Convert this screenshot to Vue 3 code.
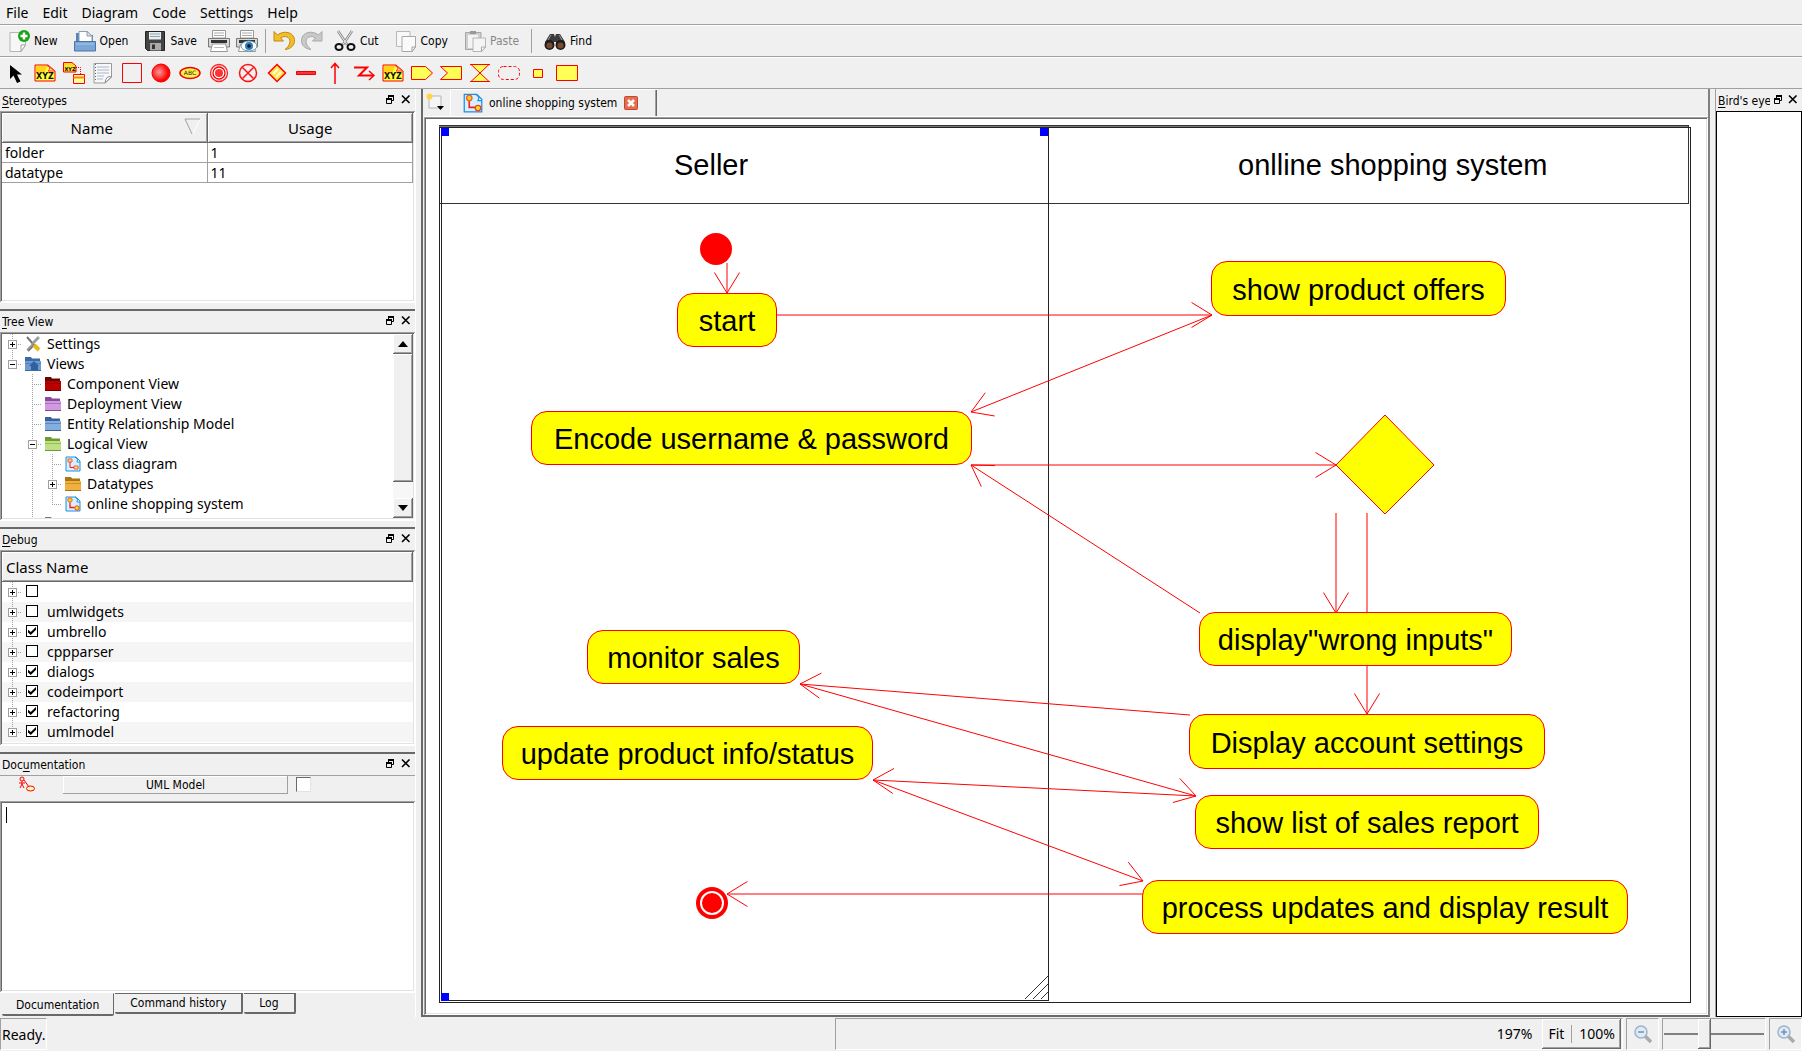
<script setup>
import { ref } from 'vue'

const menus = ['File', 'Edit', 'Diagram', 'Code', 'Settings', 'Help']

const sheet = '<path d="M2 2.500H17.500V15L13 21.500H2Z" fill="#f7f7f5" stroke="#b5b5b5"/><path d="M17.500 15H13V21.500Z" fill="#fff" stroke="#a0a0a0"/>'
const printer = '<path d="M4.500 0.500H17.500V8H4.500Z" fill="#fff" stroke="#999"/><path d="M6 3H16M6 5.500H16" stroke="#aaa"/><path d="M0.500 8.500H21.500V17H0.500Z" fill="#d8d8d8" stroke="#777"/><path d="M3 10H19V13H3Z" fill="#333"/><path d="M4.500 14H17.500L19.500 21.500H2.500Z" fill="#fff" stroke="#999"/><path d="M6 17.500H16" stroke="#bbb"/>'
const xyz = '<path d="M1 3H14L21 9V19H1Z" fill="#ffff3c" stroke="#f00"/><path d="M2 4H13L10 12H2Z" fill="#ffd21c"/><path d="M13 3.500C17 4 16 8 14 9H21Z" fill="#ffe680" stroke="#f33"/><text x="11" y="17" text-anchor="middle" font-family="DejaVu Sans" font-weight="bold" font-size="8" fill="#111">XYZ</text>'
const diagramDoc = '<path d="M1 1H11L15 5V15H1Z" fill="#d7efff" stroke="#1c8fe0"/><path d="M10 1Q14 3 12 6L15 6" fill="#fff" stroke="#1c8fe0"/>'
const folder = (fill, edge) => `<path d="M0 15V1H6L7 2.500H15V15Z" fill="${edge}"/><path d="M0 5H16V14H0Z" fill="${fill}"/><path d="M0 14.500H16" stroke="${edge}"/><path d="M0 7.500H16" stroke="${edge}" opacity=".5"/>`

const icons = {
  new: sheet + '<circle cx="16" cy="6" r="6" fill="#17a317"/><path d="M16 2.500V9.500M12.500 6H19.500" stroke="#fff" stroke-width="2.500"/>',
  open: '<path d="M2 12V3H7L8 5H19V12" fill="#5784b8"/><path d="M5 1.500H13L18 6V13H5Z" fill="#fff" stroke="#8a9db5"/><path d="M13 1.500V6H18Z" fill="#e6e6e6" stroke="#8a9db5"/><path d="M0.500 11.500H21.500V21H0.500Z" fill="#7ba6d6" stroke="#4a74a8"/><path d="M2 14H20" stroke="#a6c8ec"/>',
  save: '<path d="M1.500 1.500H20.500V20.500H3.500L1.500 18.500Z" fill="#444" stroke="#222"/><path d="M5 2H17V9.500H5Z" fill="#e9eef2"/><path d="M6 4H16M6 6.500H16" stroke="#8aa"/><path d="M6 13H17V20.500H6Z" fill="#aaa"/><path d="M8 14.500H11V19H8Z" fill="#333"/>',
  print: printer,
  preview: printer + '<ellipse cx="13" cy="16" rx="8" ry="5" fill="#fff" stroke="#69a"/><circle cx="13" cy="16" r="4" fill="#2b7fc4"/><circle cx="13" cy="16" r="1.800" fill="#111"/>',
  undo: '<path d="M1 1.500V11H10.500L7.500 8C12 5 17 7 17 11.500C17 15 14.500 17.500 12 19.500C18 19 22 15 21.500 9.500C20.500 2 11 0 4.500 5Z" fill="#f3bd2c" stroke="#c28a10"/>',
  redo: '<path d="M21 1.500V11H11.500L14.500 8C10 5 5 7 5 11.500C5 15 7.500 17.500 10 19.500C4 19 0 15 0.500 9.500C1.500 2 11 0 17.500 5Z" fill="#c9c9c9" stroke="#a8a8a8"/>',
  cut: '<path d="M4 1L13 14.500M18 1L9 14.500" stroke="#888" stroke-width="2.500"/><path d="M4 1L13 14.500M18 1L9 14.500" stroke="#eee"/><ellipse cx="5" cy="17" rx="3.500" ry="3" fill="none" stroke="#111" stroke-width="2"/><ellipse cx="17" cy="17" rx="3.500" ry="3" fill="none" stroke="#111" stroke-width="2"/>',
  copy: '<path d="M1.500 1.500H15V16.500H1.500Z" fill="#f8f8f8" stroke="#b8b8b8"/><path d="M7 6.500H20.500V17L17 21.500H7Z" fill="#fafafa" stroke="#a8a8a8"/><path d="M20.500 17H17V21.500Z" fill="#fff" stroke="#a0a0a0"/>',
  paste: '<path d="M1.500 2.500H17V19.500H1.500Z" fill="#d0d0d0" stroke="#a5a5a5"/><path d="M4 5H14V18H4Z" fill="#f4f4f4"/><path d="M6 1H12V4H6Z" fill="#999"/><path d="M9 8H21.500V17L17.500 21.500H9Z" fill="#f4f4f4" stroke="#b5b5b5"/><path d="M21.500 17H17.500V21.500Z" fill="#fff" stroke="#a8a8a8"/>',
  find: '<path d="M6 4H10L11 7L12 4H16L21 12V17H12V12H10V17H1V12Z" fill="#3c3c3c"/><circle cx="5.500" cy="15" r="5" fill="#1d1d1d"/><circle cx="16.500" cy="15" r="5" fill="#1d1d1d"/><circle cx="5.500" cy="15.500" r="3" fill="#7a4a30"/><circle cx="16.500" cy="15.500" r="3" fill="#7a4a30"/><path d="M7 5L4 10M15 5L18 10" stroke="#999"/>',
  pointer: '<path d="M5 3V17L8.500 13.500L12 21L15.500 19.500L12 12.500H17Z" fill="#000"/>',
  xyz,
  object: '<path d="M0.500 0.500H9L13 4V10H0.500Z" fill="#ffe030" stroke="#f00"/><text x="7" y="9" text-anchor="middle" font-family="DejaVu Sans" font-weight="bold" font-size="5">XYZ</text><path d="M13 5.500H17.500V12" fill="none" stroke="#f00" stroke-dasharray="1 1"/><path d="M10.500 12.500H21.500V21.500H10.500Z" fill="#ffffa0" stroke="#f00"/><path d="M10.500 15.500H21.500" stroke="#f80" stroke-width="2"/>',
  note: '<path d="M2 1.500H19.500V15L13 21H2Z" fill="#f6f8fa" stroke="#999"/><path d="M5 5H17M5 8H17M5 11H17M5 14H12M5 17H11" stroke="#aab6c6"/><path d="M3.500 2V20" stroke="#666" stroke-dasharray="1 2"/><path d="M19.500 15Q14 13 13 21Z" fill="#fff" stroke="#888"/>',
  box: '<path d="M1.500 1.500H20.500V20.500H1.500Z" fill="none" stroke="#f00"/>',
  ball: '<defs><radialGradient id="ball" cx=".4" cy=".45"><stop offset="0" stop-color="#ff9a9a"/><stop offset="1" stop-color="#f00"/></radialGradient></defs><circle cx="11" cy="11" r="9" fill="url(#ball)" stroke="#f00000"/>',
  abc: '<ellipse cx="11" cy="11" rx="10" ry="5.500" fill="#fff04a" stroke="#e00" stroke-width="1.500"/><text x="11" y="13" text-anchor="middle" font-family="DejaVu Sans" font-size="6" fill="#222">ABC</text>',
  ring: '<circle cx="11" cy="11" r="8.500" fill="none" stroke="#f22" stroke-width="1.300"/><circle cx="11" cy="11" r="6" fill="#fff" stroke="#f00" stroke-width="1.300"/><circle cx="11" cy="11" r="4" fill="#f33"/>',
  cross: '<circle cx="11" cy="11" r="8.500" fill="none" stroke="#f11" stroke-width="1.500"/><path d="M5.500 5.500L16.500 16.500M16.500 5.500L5.500 16.500" stroke="#f11" stroke-width="1.500"/>',
  diamond: '<path d="M11 2.500L19.500 11L11 19.500L2.500 11Z" fill="#ffe84a" stroke="#f00" stroke-width="1.500"/><path d="M7 12L12 7M10 15L15 10" stroke="#fffbe0" stroke-width="2"/>',
  bar: '<path d="M1.500 9.500H20.500V12.500H1.500Z" fill="#f33" stroke="#e00"/>',
  up: '<path d="M11 22V2M7 6L11 1.500L15 6" fill="none" stroke="#f00" stroke-width="1.500"/>',
  zigzag: '<path d="M1 5.500H14L6 13.500H20" fill="none" stroke="#f00" stroke-width="2"/><path d="M16 9L21 13.500L16 18" fill="none" stroke="#f00" stroke-width="1.500"/>',
  send: '<path d="M0.500 4.500H14.500L21.500 11L14.500 17.500H0.500Z" fill="#ff5" stroke="#f00"/>',
  accept: '<path d="M0.500 4.500H21.500V17.500H0.500L7.500 11Z" fill="#ff5" stroke="#f00"/>',
  time: '<path d="M2 2.500H20L2 19.500H20Z" fill="#ff5" stroke="#f00"/><path d="M1 2.500H21M1 19.500H21" stroke="#f00"/>',
  region: '<rect x="0.500" y="4.500" width="21" height="13" rx="5" fill="none" stroke="#f00" stroke-dasharray="3 2"/>',
  pin: '<path d="M6.500 7.500H15.500V15.500H6.500Z" fill="#ff5" stroke="#f00"/>',
  node: '<path d="M0.500 3.500H21.500V18.500H0.500Z" fill="#ff5" stroke="#f00"/>',
  tools: '<path d="M2 1L9 9L3 15" fill="none" stroke="#777" stroke-width="2"/><path d="M14 1L8 7" stroke="#aaa" stroke-width="3"/><path d="M9 9L14 14" stroke="#e8b818" stroke-width="4"/><path d="M13 2L2 14" stroke="#999" stroke-width="1.500"/>',
  views: folder('#6f9bd0', '#3a6ba5') + '<path d="M9 5L14 10H13V14H6V10H4Z" fill="#31609c"/>',
  red: folder('#b80000', '#6d0000'),
  purple: folder('#cf9ade', '#8a4a9c'),
  blue: folder('#85aee0', '#3a6299'),
  green: folder('#bfe080', '#6d9a35'),
  orange: folder('#efb040', '#a87414'),
  gray: folder('#aaa', '#777'),
  classDiagram: diagramDoc + '<path d="M3 3H7V6H3ZM9 10H13V13H9Z" fill="#ffd9b0" stroke="#f06020"/><path d="M5 6V11.500H9" fill="none" stroke="#e22"/>',
  activity: diagramDoc + '<circle cx="5" cy="4" r="2.200" fill="#ffd020" stroke="#f06020"/><circle cx="12" cy="12" r="2.200" fill="#ffe020" stroke="#f04020"/><path d="M5 6.500V11.500H9.500" fill="none" stroke="#e22" stroke-width="1.300"/>',
  newTab: '<path d="M3 3H15V15H3Z" fill="#f5f5f5" stroke="#b5b5b5"/><circle cx="3.500" cy="3.500" r="3" fill="#ffd640"/><path d="M11 13H18L14.500 17Z" fill="#000"/>',
  closeTab: '<rect x="1.500" y="1.500" width="13" height="13" rx="1" fill="#e07050" stroke="#c8452c"/><path d="M5 5L11 11M11 5L5 11" stroke="#fff" stroke-width="2.500"/>',
  float: '<path d="M3 1H9V3H3ZM1 4H7V6H1Z" fill="#000"/><path d="M3.500 4V1.500H8.500V6.500H7M1.500 4.500H6.500V9.500H1.500Z" fill="none" stroke="#000"/>',
  close: '<path d="M1 1.500L8.500 9M8.500 1.500L1 9" stroke="#000" stroke-width="1.600"/>',
  useCase: '<circle cx="3" cy="3" r="2" fill="none" stroke="#f00"/><path d="M3 5V8L1 12M3 8L5 12M0 7H6M5 4L10 11" fill="none" stroke="#f00"/><ellipse cx="11.500" cy="12.500" rx="4" ry="2.500" fill="#fff8b0" stroke="#f00"/>',
  zoomOut: '<path d="M11 11L17 17" stroke="#aaa" stroke-width="3.500"/><circle cx="7" cy="7" r="6" fill="#dfeaf5" stroke="#9db4cc" stroke-width="1.500"/><path d="M4 7H10" stroke="#6f93bd" stroke-width="1.500"/>',
  zoomIn: '<path d="M11 11L17 17" stroke="#aaa" stroke-width="3.500"/><circle cx="7" cy="7" r="6" fill="#dfeaf5" stroke="#9db4cc" stroke-width="1.500"/><path d="M4 7H10M7 4V10" stroke="#6f93bd" stroke-width="1.500"/>',
}

const actions = [
  { icon: 'new', text: 'New' },
  { icon: 'open', text: 'Open' },
  { icon: 'save', text: 'Save' },
  { icon: 'print' },
  { icon: 'preview' },
  { separator: true },
  { icon: 'undo' },
  { icon: 'redo' },
  { icon: 'cut', text: 'Cut' },
  { icon: 'copy', text: 'Copy' },
  { icon: 'paste', text: 'Paste', disabled: true },
  { separator: true },
  { icon: 'find', text: 'Find' },
]

const tools = [
  'pointer', 'xyz', 'object', 'note', 'box', 'ball', 'abc', 'ring', 'cross', 'diamond',
  'bar', 'up', 'zigzag', 'xyz', 'send', 'accept', 'time', 'region', 'pin', 'node',
]

const stereotypes = [
  { name: 'folder', usage: 1 },
  { name: 'datatype', usage: 11 },
]

// Branch cells, left to right: '' empty, v line, t tee, l last, + / - expander (e: expander that ends its line)
const tree = [
  { cells: ['+'], icon: 'tools', text: 'Settings' },
  { cells: ['e'], icon: 'views', text: 'Views' },
  { cells: ['', 't'], icon: 'red', text: 'Component View' },
  { cells: ['', 't'], icon: 'purple', text: 'Deployment View' },
  { cells: ['', 't'], icon: 'blue', text: 'Entity Relationship Model' },
  { cells: ['', '-'], icon: 'green', text: 'Logical View' },
  { cells: ['', 'v', 't'], icon: 'classDiagram', text: 'class diagram' },
  { cells: ['', 'v', '+'], icon: 'orange', text: 'Datatypes' },
  { cells: ['', 'v', 'l'], icon: 'activity', text: 'online shopping system' },
  { cells: ['', 't'], icon: 'gray', text: '' },
]

const branch = {
  '': '',
  v: 'M10 0V20',
  t: 'M10 0V20M10 10H20',
  l: 'M10 0V10M10 10H20',
  '+': 'M10 0V20M10 10H20',
  '-': 'M10 0V20M10 10H20',
  e: 'M10 0V10M10 10H20',
}

const classes = ref([
  { name: '', on: false },
  { name: 'umlwidgets', on: false },
  { name: 'umbrello', on: true },
  { name: 'cppparser', on: false },
  { name: 'dialogs', on: true },
  { name: 'codeimport', on: true },
  { name: 'refactoring', on: true },
  { name: 'umlmodel', on: true },
])

const notes = ref('')
const zoom = ref(39)

const nodes = [
  { text: 'start', x: 251, y: 174, w: 100, h: 54 },
  { text: 'Encode username & password', x: 105, y: 292, w: 441, h: 54 },
  { text: 'show product offers', x: 785, y: 142, w: 295, h: 55 },
  { text: 'display"wrong inputs"', x: 773, y: 493, w: 313, h: 54 },
  { text: 'Display account settings', x: 763, y: 595, w: 356, h: 55 },
  { text: 'show list of sales report', x: 769, y: 676, w: 344, h: 54 },
  { text: 'process updates and display result', x: 716, y: 761, w: 486, h: 54 },
  { text: 'monitor sales', x: 161, y: 511, w: 213, h: 54 },
  { text: 'update product info/status', x: 76, y: 607, w: 371, h: 54 },
]

const links = [
  [301, 144, 301, 174],
  [351, 196, 786, 196],
  [786, 196, 545, 293],
  [545, 346, 910, 346],
  [774, 494, 545, 346],
  [910, 394, 910, 494],
  [941, 394, 941, 595],
  [764, 596, 374, 565],
  [374, 565, 770, 677],
  [770, 677, 447, 661],
  [447, 661, 717, 762],
  [717, 775, 301, 775],
]

const HEAD_LENGTH = 24
const HEAD_ANGLE = 0.55

function linkPath([x1, y1, x2, y2]) {
  const back = Math.atan2(y1 - y2, x1 - x2)
  const wing = (a) => `${x2 + HEAD_LENGTH * Math.cos(a)} ${y2 + HEAD_LENGTH * Math.sin(a)}`
  return `M${x1} ${y1}L${x2} ${y2}M${wing(back - HEAD_ANGLE)}L${x2} ${y2}L${wing(back + HEAD_ANGLE)}`
}
</script>

<template>
  <div class="app">
    <nav class="menubar">
      <button v-for="m in menus" :key="m" type="button">{{ m }}</button>
    </nav>

    <div class="toolbar actions">
      <template v-for="(a, i) in actions" :key="i">
        <span v-if="a.separator" class="separator"></span>
        <button v-else type="button" :disabled="a.disabled" :class="{ labelled: a.text }">
          <svg width="22" height="22" viewBox="0 0 22 22" v-html="icons[a.icon]"></svg>
          <span v-if="a.text">{{ a.text }}</span>
        </button>
      </template>
    </div>

    <div class="toolbar tools">
      <button v-for="(t, i) in tools" :key="i" type="button">
        <svg width="22" height="22" viewBox="0 0 22 22" v-html="icons[t]"></svg>
      </button>
    </div>

    <main class="work">
      <aside class="docks">
        <section class="dock stereotypes">
          <header class="title">
            <h2><u>S</u>tereotypes</h2>
            <button type="button"><svg width="10" height="10" v-html="icons.float"></svg></button>
            <button type="button"><svg width="10" height="10" v-html="icons.close"></svg></button>
          </header>
          <div class="sunken">
            <table>
              <thead>
                <tr>
                  <th>
                    Name
                    <svg class="sort" width="17" height="17"><path d="M16 1L9 16" stroke="#fff" fill="none" /><path d="M16 1H1L8 16" stroke="#a0a0a0" fill="none" /></svg>
                  </th>
                  <th>Usage</th>
                </tr>
              </thead>
              <tbody>
                <tr v-for="s in stereotypes" :key="s.name">
                  <td>{{ s.name }}</td>
                  <td>{{ s.usage }}</td>
                </tr>
              </tbody>
            </table>
          </div>
        </section>

        <section class="dock treeview">
          <header class="title">
            <h2><u>T</u>ree View</h2>
            <button type="button"><svg width="10" height="10" v-html="icons.float"></svg></button>
            <button type="button"><svg width="10" height="10" v-html="icons.close"></svg></button>
          </header>
          <div class="sunken scroller">
            <ul class="rows tree">
              <li v-for="(r, i) in tree" :key="i">
                <svg v-for="(c, j) in r.cells" :key="j" class="branch" width="20" height="20">
                  <path :d="branch[c]" stroke="#a0a0a0" stroke-dasharray="1 1" />
                  <g v-if="'+-e'.includes(c) && c">
                    <rect x="6" y="6" width="8" height="8" fill="#fff" stroke="#a0a0a0" />
                    <path :d="c === '+' ? 'M8 10H13M10 8V13' : 'M8 10H13'" stroke="#000" />
                  </g>
                </svg>
                <svg class="glyph" width="16" height="16" v-html="icons[r.icon]"></svg>
                <span>{{ r.text }}</span>
              </li>
            </ul>
            <div class="scrollbar">
              <button type="button"><svg width="10" height="6"><path d="M0 6L5 0L10 6Z" /></svg></button>
              <div class="thumb"></div>
              <button type="button"><svg width="10" height="6"><path d="M0 0L5 6L10 0Z" /></svg></button>
            </div>
          </div>
        </section>

        <section class="dock debug">
          <header class="title">
            <h2><u>D</u>ebug</h2>
            <button type="button"><svg width="10" height="10" v-html="icons.float"></svg></button>
            <button type="button"><svg width="10" height="10" v-html="icons.close"></svg></button>
          </header>
          <div class="sunken">
            <div class="column-head">Class Name</div>
            <ul class="rows striped">
              <li v-for="(c, i) in classes" :key="i">
                <svg class="branch" width="20" height="20">
                  <path :d="branch[i === classes.length - 1 ? 'l' : 't']" stroke="#a0a0a0" stroke-dasharray="1 1" />
                  <rect x="6" y="6" width="8" height="8" fill="#fff" stroke="#a0a0a0" />
                  <path d="M8 10H13M10 8V13" stroke="#000" />
                </svg>
                <label><input v-model="c.on" type="checkbox" />{{ c.name }}</label>
              </li>
            </ul>
          </div>
        </section>

        <section class="dock documentation">
          <header class="title">
            <h2>Doc<u>u</u>mentation</h2>
            <button type="button"><svg width="10" height="10" v-html="icons.float"></svg></button>
            <button type="button"><svg width="10" height="10" v-html="icons.close"></svg></button>
          </header>
          <div class="subject">
            <svg width="17" height="17" v-html="icons.useCase"></svg>
            <button type="button">UML Model</button>
            <input type="checkbox" aria-label="UML Model" />
          </div>
          <div class="sunken editor">
            <textarea v-model="notes" aria-label="Documentation"></textarea>
            <span class="caret"></span>
          </div>
        </section>

        <nav class="dock-tabs">
          <button type="button" class="current">Documentation</button>
          <button type="button">Command history</button>
          <button type="button">Log</button>
        </nav>
      </aside>

      <section class="center">
        <div class="tabs">
          <button type="button" class="new-tab"><svg width="20" height="20" v-html="icons.newTab"></svg></button>
          <div class="tab">
            <svg width="20" height="20" viewBox="0 0 16 16" v-html="icons.activity"></svg>
            <span>online shopping system</span>
            <button type="button"><svg width="16" height="16" v-html="icons.closeTab"></svg></button>
          </div>
        </div>

        <div class="sunken canvas">
          <div class="sheet">
            <svg class="drawing" width="100%" height="100%">
              <g class="frames">
                <rect x="13" y="6" width="1249" height="78" stroke="#333" />
                <rect x="13" y="8" width="1251" height="875" stroke="#222" />
                <rect x="15" y="8" width="607" height="873" stroke="#222" />
                <path d="M13 7H1262" stroke="#777" />
              </g>
              <path class="grip" d="M599 880L622 857M607 880L622 865M615 880L622 873" />
              <g class="links">
                <path v-for="(l, i) in links" :key="i" :d="linkPath(l)" />
              </g>
              <path class="decision" d="M959 296L1008 346L959 395L910 346Z" />
              <circle cx="290" cy="130" r="16" fill="#f00" />
              <circle cx="286" cy="784" r="16" fill="#f00" />
              <circle cx="286" cy="784" r="11" fill="#f00" stroke="#fff" stroke-width="2" />
              <g class="handles">
                <rect x="15" y="9" width="8" height="8" />
                <rect x="614" y="9" width="8" height="8" />
                <rect x="15" y="874" width="8" height="8" />
              </g>
              <text x="248" y="56">Seller</text>
              <text x="812" y="56">onlline shopping system</text>
            </svg>
            <div
              v-for="n in nodes"
              :key="n.text"
              class="activity"
              :style="{ left: n.x + 'px', top: n.y + 'px', width: n.w + 'px', height: n.h + 'px' }"
            >{{ n.text }}</div>
          </div>
        </div>
      </section>

      <aside class="birdseye">
        <header class="title">
          <h2><u>B</u>ird's eye</h2>
          <button type="button"><svg width="10" height="10" v-html="icons.float"></svg></button>
          <button type="button"><svg width="10" height="10" v-html="icons.close"></svg></button>
        </header>
        <div class="overview"></div>
      </aside>
    </main>

    <footer class="status">
      <div class="message"><span class="well">Ready.</span></div>
      <div class="well zoom-levels">
        <output>197%</output>
        <div class="presets">
          <button type="button">Fit</button>
          <span class="separator"></span>
          <button type="button">100%</button>
        </div>
      </div>
      <button type="button" class="well"><svg width="18" height="18" v-html="icons.zoomOut"></svg></button>
      <div class="well"><input v-model="zoom" type="range" min="0" max="100" aria-label="Zoom" /></div>
      <button type="button" class="well"><svg width="18" height="18" v-html="icons.zoomIn"></svg></button>
    </footer>
  </div>
</template>

<style>
body {
  margin: 0;
  background: #f0f0f0;
}
</style>

<style scoped>
.app {
  display: flex;
  flex-direction: column;
  height: 100vh;
  overflow: hidden;
  background: #f0f0f0;
  color: #000;
  font: 15px/20px "Noto Sans", "Open Sans", sans-serif;
}

.app *,
.app *::before {
  box-sizing: border-box;
}

button {
  display: flex;
  align-items: center;
  margin: 0;
  padding: 0;
  border: 0;
  background: none;
  color: inherit;
  font: inherit;
  white-space: nowrap;
}

svg {
  flex: none;
  display: block;
}

.menubar {
  display: flex;
  flex: none;
  gap: 14px;
  height: 25px;
  padding: 1px 6px 0;
  border-bottom: 1px solid #a0a0a0;
  font-size: 14px;
}

.toolbar {
  display: flex;
  flex: none;
  align-items: center;
  height: 32px;
  border-top: 1px solid #fff;
  border-bottom: 1px solid #a0a0a0;
  font-family: "DejaVu Sans Condensed", "DejaVu Sans", sans-serif;
  font-size: 12px;
}

.actions button {
  padding: 0 3px;
}

.actions .labelled {
  gap: 4px;
  padding: 0 8px;
}

.actions button:disabled {
  color: #888;
}

.separator {
  width: 1px;
  height: 24px;
  margin: 0 4px;
  background: #a0a0a0;
}

.tools {
  padding-left: 1px;
}

.tools button {
  justify-content: center;
  width: 29px;
}

.work {
  display: flex;
  flex: 1;
  min-height: 0;
  gap: 5px;
}

.docks {
  display: flex;
  flex: none;
  flex-direction: column;
  width: 416px;
  border-right: 1px solid #fff;
}

.dock {
  display: flex;
  flex: none;
  flex-direction: column;
  margin-bottom: 6px;
  border-bottom: 1px solid #fff;
}

.dock + .dock {
  border-top: 2px solid #696969;
}

.title {
  display: flex;
  flex: none;
  align-items: center;
  gap: 6px;
  height: 21px;
  padding: 0 4px 0 2px;
}

.stereotypes .title,
.birdseye .title {
  height: 22px;
  padding-top: 1px;
}

.title h2 {
  flex: 1;
  min-width: 0;
  margin: 0;
  overflow: hidden;
  white-space: nowrap;
  font: 12px/20px "DejaVu Sans Condensed", "DejaVu Sans", sans-serif;
}

.title u {
  text-underline-offset: 2px;
}

.title button {
  padding-bottom: 3px;
}

.sunken {
  padding: 2px;
  background: #fff;
  box-shadow: inset 1px 1px #a0a0a0, inset -1px -1px #fff, inset 2px 2px #696969, inset -2px -2px #e3e3e3;
}

.stereotypes .sunken {
  height: 191px;
}

.treeview .sunken {
  height: 188px;
}

.debug .sunken {
  height: 195px;
}

table {
  width: 100%;
  table-layout: fixed;
  border-collapse: separate;
  border-spacing: 0;
}

th,
.column-head {
  position: relative;
  height: 30px;
  padding: 0;
  background: #f0f0f0;
  box-shadow: inset -1px -1px #696969, inset 1px 1px #fff, inset -2px -2px #a0a0a0;
  font-weight: normal;
  font-size: 15px;
}

th:first-child {
  padding-right: 26px;
}

.sort {
  position: absolute;
  top: 5px;
  right: 7px;
}

td {
  height: 20px;
  padding: 0 3px;
  border-right: 1px solid #a0a0a0;
  border-bottom: 1px solid #a0a0a0;
  font-size: 14px;
  line-height: 19px;
}

.column-head {
  padding: 5px 4px;
}

.rows {
  flex: 1;
  min-width: 0;
  margin: 0;
  padding: 0;
  overflow: hidden;
  list-style: none;
  font-size: 14px;
}

.rows li {
  display: flex;
  align-items: center;
  height: 20px;
  white-space: nowrap;
}

.striped li:nth-child(even) {
  background: #f5f5f5;
}

.branch {
  fill: none;
  shape-rendering: crispEdges;
}

.glyph {
  margin: 0 6px 0 3px;
}

.rows label {
  display: flex;
  align-items: center;
  gap: 9px;
  padding-left: 4px;
}

.rows input {
  display: grid;
  place-content: center;
  width: 12px;
  height: 12px;
  margin: 0 0 2px;
  border: 1px solid #000;
  background: #fff;
  appearance: none;
}

.rows input:checked::before {
  width: 8px;
  height: 8px;
  background: #000;
  clip-path: polygon(0 35%, 35% 62%, 100% 0, 100% 35%, 35% 100%, 0 70%);
  content: "";
}

.scroller {
  display: flex;
}

.scrollbar {
  display: flex;
  flex-direction: column;
  width: 20px;
  background: #f7f7f7;
}

.scrollbar button,
.thumb {
  justify-content: center;
  height: 20px;
  background: #f0f0f0;
  box-shadow: inset -1px -1px #696969, inset 1px 1px #fff, inset -2px -2px #a0a0a0;
}

.thumb {
  flex: 1;
  margin-bottom: 16px;
}

.documentation {
  flex: 1;
  min-height: 0;
  margin-bottom: 0;
}

.subject {
  display: flex;
  flex: none;
  align-items: flex-start;
  height: 26px;
  padding-left: 19px;
  border-top: 1px solid #a0a0a0;
  font: 12px/18px "DejaVu Sans Condensed", "DejaVu Sans", sans-serif;
}

.subject button {
  justify-content: center;
  width: 225px;
  margin: 0 8px 0 27px;
  box-shadow: inset -1px -1px #a0a0a0, inset 1px 1px #fff;
}

.subject input {
  width: 15px;
  height: 15px;
  margin: 1px 0 0;
  border: 1px solid;
  border-color: #696969 #e3e3e3 #e3e3e3 #696969;
  background: #fff;
  appearance: none;
}

.editor {
  position: relative;
  display: flex;
  flex: 1;
  min-height: 0;
}

.editor textarea {
  flex: 1;
  padding: 4px;
  border: 0;
  outline: 0;
  resize: none;
  font: inherit;
}

.caret {
  position: absolute;
  top: 6px;
  left: 6px;
  width: 1px;
  height: 16px;
  background: #000;
}

.dock-tabs {
  display: flex;
  flex: none;
  align-items: flex-start;
  gap: 1px;
  height: 24px;
  padding-left: 2px;
  font: 12px/20px "DejaVu Sans Condensed", "DejaVu Sans", sans-serif;
}

.dock-tabs button {
  height: 21px;
  padding: 0 15px;
  border: solid #696969;
  border-width: 1px 2px 2px 0;
  border-radius: 0 0 2px 2px;
}

.dock-tabs .current {
  height: 23px;
  padding: 2px 14px 0;
  border-top-color: #f0f0f0;
  border-right-width: 1px;
}

.center {
  display: flex;
  flex: 1;
  flex-direction: column;
  min-width: 0;
  border: solid #696969;
  border-width: 0 2px 2px;
  border-right-color: #808080;
}

.tabs {
  display: flex;
  flex: none;
  height: 28px;
  border-bottom: 1px solid #fff;
  font: 12px/20px "DejaVu Sans Condensed", "DejaVu Sans", sans-serif;
}

.new-tab {
  width: 27px;
  padding-left: 3px;
}

.tab {
  display: flex;
  align-items: center;
  gap: 6px;
  padding: 0 18px 0 12px;
  border: solid #fff;
  border-width: 1px 0 0 1px;
  box-shadow: inset -1px 0 #696969, inset -2px 0 #a0a0a0;
}

.canvas {
  display: flex;
  flex: 1;
  min-height: 0;
  margin-left: 1px;
}

.sheet {
  position: relative;
  flex: 1;
  overflow: hidden;
}

.drawing,
.activity {
  font: 29px/36px "Liberation Sans", Arial, sans-serif;
}

.frames {
  fill: none;
  shape-rendering: crispEdges;
}

.grip {
  fill: none;
  stroke: #333;
}

.links {
  fill: none;
  stroke: #f00;
}

.decision {
  fill: #ff0;
  stroke: #f00;
}

.handles {
  fill: #00f;
}

.activity {
  position: absolute;
  display: flex;
  align-items: center;
  justify-content: center;
  padding-top: 2px;
  border: 1px solid #f00;
  border-radius: 16px;
  background: #ff0;
  white-space: nowrap;
}

.birdseye {
  display: flex;
  flex: none;
  flex-direction: column;
  width: 87px;
  border-left: 1px solid #a0a0a0;
}

.birdseye .title {
  gap: 5px;
}

.birdseye h2 {
  margin-right: -2px;
}

.overview {
  flex: 1;
  border: 1px solid #000;
  background: #fff;
}

.status {
  display: flex;
  flex: none;
  gap: 3px;
  height: 34px;
  padding: 1px 0;
  font-size: 14px;
}

.well {
  border: 1px solid;
  border-color: #a0a0a0 #fff #fff #a0a0a0;
}

.message {
  display: flex;
  flex: 53 1 0;
}

.message .well {
  padding: 6px 1px 4px;
}

.zoom-levels {
  display: flex;
  flex: 50 1 0;
  align-items: center;
  justify-content: flex-end;
  gap: 10px;
  padding-right: 1px;
}

.presets {
  display: flex;
  align-items: center;
  height: 30px;
  padding: 0 6px;
  box-shadow: inset -1px -1px #696969, inset 1px 1px #fff, inset -2px -2px #a0a0a0;
}

.presets .separator {
  height: 18px;
  margin: 0 7px;
}

.status > button {
  justify-content: center;
  width: 33px;
}

.status input {
  width: 100px;
  height: 30px;
  margin: 0 1px;
  background: linear-gradient(#808080, #808080) center / 100% 2px no-repeat;
  appearance: none;
}

.status input::-webkit-slider-thumb {
  width: 13px;
  height: 30px;
  background: #f0f0f0;
  box-shadow: inset -1px -1px #696969, inset 1px 1px #fff, inset -2px -2px #a0a0a0;
  appearance: none;
}
</style>
